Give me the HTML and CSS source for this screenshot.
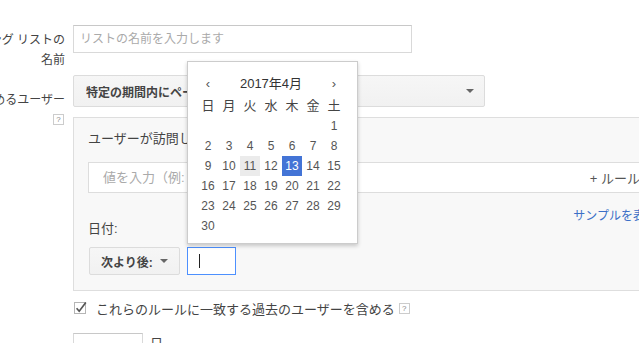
FILE: index.html
```html
<!DOCTYPE html>
<html lang="ja">
<head>
    <meta charset="UTF-8">
    <meta name="viewport" content="width=device-width, initial-scale=1.0">
    <title>リストの作成</title>
    <link rel="stylesheet" href="styles.css">
</head>
<body>
    <div class="page">
        <div class="row row-name">
            <div class="label label-name">
                <span>リマーケティング リストの</span>
                <span>名前</span>
            </div>
            <div class="field">
                <input type="text" class="name-input" placeholder="リストの名前を入力します">
            </div>
        </div>

        <div class="row row-users">
            <div class="label label-users">
                <span>リストに含めるユーザー</span>
                <span class="help">?</span>
            </div>
            <div class="field">
                <div class="select">
                    <span class="select-text">特定の期間内にページを訪問したユーザー</span>
                    <span class="arrow"></span>
                </div>

                <div class="panel">
                    <div class="panel-title">ユーザーが訪問したページ</div>
                    <div class="rule-row">
                        <input type="text" class="rule-input" placeholder="値を入力（例: 製品）">
                        <span class="add-rule">+ ルールを追加</span>
                    </div>
                    <div class="date-block">
                        <div class="date-fields">
                            <div class="date-label">日付:</div>
                            <div class="date-controls">
                                <div class="button">次より後:<span class="arrow"></span></div>
                                <div class="date-input"><span class="caret"></span></div>
                            </div>
                        </div>
                        <a href="#" class="sample-link">サンプルを表示</a>
                    </div>
                </div>

                <div class="check-row">
                    <svg class="check" width="14" height="14" viewBox="0 0 14 14">
                        <rect x="0.5" y="1.5" width="11" height="11" fill="#fff" stroke="#b5b5b5"/>
                        <path d="M2.6 7.2 L5.2 10.2 L11.8 1.6" fill="none" stroke="#555" stroke-width="1.7"/>
                    </svg>
                    <span>これらのルールに一致する過去のユーザーを含める</span>
                    <span class="help">?</span>
                </div>
            </div>
        </div>

        <div class="row row-days">
            <div class="label"></div>
            <div class="field days-field">
                <input type="text" class="days-input">
                <span>日</span>
            </div>
        </div>

        <div class="calendar">
            <div class="cal-head">
                <span class="cal-nav">&lsaquo;</span>
                <span class="cal-title">2017年4月</span>
                <span class="cal-nav">&rsaquo;</span>
            </div>
            <div class="cal-grid cal-week">
                <span>日</span><span>月</span><span>火</span><span>水</span><span>木</span><span>金</span><span>土</span>
            </div>
            <div class="cal-grid cal-days">
                <span></span><span></span><span></span><span></span><span></span><span></span><span>1</span>
                <span>2</span><span>3</span><span>4</span><span>5</span><span>6</span><span>7</span><span>8</span>
                <span>9</span><span>10</span><span class="today">11</span><span>12</span><span class="selected">13</span><span>14</span><span>15</span>
                <span>16</span><span>17</span><span>18</span><span>19</span><span>20</span><span>21</span><span>22</span>
                <span>23</span><span>24</span><span>25</span><span>26</span><span>27</span><span>28</span><span>29</span>
                <span>30</span>
            </div>
        </div>
    </div>
</body>
</html>
```

FILE: styles.css
```css
html,
body {
    margin: 0;
    overflow: hidden;
}

body {
    width: 639px;
    height: 343px;
    background: #fff;
    color: #444;
    font-family: "Liberation Sans", Arial, "Noto Sans CJK JP", sans-serif;
}

.page {
    position: relative;
    padding-top: 25px;
}

.row {
    display: grid;
    grid-template-columns: 65px 632px;
    column-gap: 8px;
}

.label {
    display: flex;
    flex-direction: column;
    align-items: flex-end;
    font-size: 12px;
    line-height: 20px;
    white-space: nowrap;
    min-width: 0;
}

.label-name {
    padding-top: 5px;
}

.label-users {
    padding-top: 15px;
}

.label-users .help {
    margin-top: 4px;
    margin-right: 1px;
}

.help {
    display: inline-block;
    width: 9px;
    height: 9px;
    border: 1px solid #ccc;
    font-size: 8px;
    line-height: 9px;
    text-align: center;
    color: #888;
    background: #fff;
}

.name-input {
    width: 339px;
    height: 28px;
    box-sizing: border-box;
    padding: 0 6px;
    border: 1px solid #d9d9d9;
    border-top-color: #c8c8c8;
    font-family: inherit;
    font-size: 12px;
    color: #333;
}

.name-input::placeholder,
.rule-input::placeholder {
    color: #aaa;
}

.row-users {
    margin-top: 5px;
}

.select {
    display: flex;
    align-items: center;
    width: 412px;
    height: 32px;
    box-sizing: border-box;
    padding: 0 10px 0 12px;
    border: 1px solid #dcdcdc;
    border-radius: 2px;
    background: linear-gradient(#f6f6f6, #f1f1f1);
    font-size: 12px;
    font-weight: bold;
    color: #444;
}

.select-text {
    flex: 1;
    overflow: hidden;
    white-space: nowrap;
}

.arrow {
    width: 0;
    height: 0;
    border-left: 4px solid transparent;
    border-right: 4px solid transparent;
    border-top: 4px solid #666;
}

.panel {
    margin-top: 10px;
    padding: 11px 14px 15px 14px;
    border: 1px solid #dedede;
    background: #f8f8f8;
    font-size: 13px;
}

.panel-title {
    line-height: 20px;
    color: #444;
}

.rule-row {
    display: flex;
    align-items: center;
    margin-top: 13px;
    height: 31px;
    box-sizing: border-box;
    padding: 0 10px 0 14px;
    border: 1px solid #ddd;
    background: #fff;
}

.rule-input {
    flex: 1;
    border: none;
    outline: none;
    padding: 0;
    background: transparent;
    font-family: inherit;
    font-size: 13px;
}

.add-rule {
    color: #555;
    white-space: nowrap;
}

.date-block {
    display: flex;
    justify-content: space-between;
    align-items: flex-start;
}

.date-fields {
    margin-top: 26px;
}

.date-label {
    line-height: 20px;
}

.date-controls {
    display: flex;
    gap: 7px;
    margin-top: 8px;
    margin-left: 1px;
}

.button {
    display: flex;
    align-items: center;
    justify-content: space-between;
    width: 91px;
    height: 28px;
    box-sizing: border-box;
    padding: 0 11px 0 11px;
    border: 1px solid #dcdcdc;
    border-radius: 2px;
    background: linear-gradient(#f6f6f6, #f1f1f1);
    font-size: 12px;
    font-weight: bold;
}

.date-input {
    display: flex;
    align-items: center;
    width: 49px;
    height: 28px;
    box-sizing: border-box;
    padding-left: 11px;
    border: 1px solid #4d90fe;
    background: #fff;
}

.caret {
    width: 1px;
    height: 14px;
    background: #222;
}

.sample-link {
    margin-top: 13px;
    margin-right: 33px;
    font-size: 12px;
    line-height: 20px;
    color: #3b6fc7;
    text-decoration: none;
    white-space: nowrap;
}

.check-row {
    display: flex;
    align-items: center;
    margin-top: 7px;
    height: 20px;
    font-size: 13px;
    color: #444;
}

.check {
    margin-left: 1px;
    margin-right: 8px;
}

.check-row .help {
    margin-left: 4px;
}

.row-days {
    margin-top: 15px;
}

.days-field {
    display: flex;
    align-items: flex-start;
    gap: 7px;
    font-size: 13px;
}

.days-input {
    width: 70px;
    height: 30px;
    box-sizing: border-box;
    border: 1px solid #d9d9d9;
    border-top-color: #c8c8c8;
}

.calendar {
    position: absolute;
    left: 187px;
    top: 61px;
    width: 171px;
    box-sizing: border-box;
    padding: 12px 13px 7px 10px;
    border: 1px solid #ccc;
    background: #fff;
    box-shadow: 0 2px 4px rgba(0, 0, 0, 0.2);
}

.cal-head,
.cal-grid {
    display: grid;
    grid-template-columns: repeat(7, 20px);
    column-gap: 1px;
    text-align: center;
}

.cal-head {
    height: 20px;
    line-height: 20px;
    font-size: 13px;
    color: #333;
}

.cal-title {
    grid-column: 2 / 7;
}

.cal-nav {
    color: #555;
}

.cal-week {
    margin-top: 2px;
    font-size: 13px;
    line-height: 20px;
    color: #444;
}

.cal-days {
    font-size: 12px;
    line-height: 20px;
    color: #555;
}

.cal-days span {
    height: 20px;
}

.cal-days .today {
    background: #ebebeb;
}

.cal-days .selected {
    background: #4374d6;
    color: #fff;
}
```
